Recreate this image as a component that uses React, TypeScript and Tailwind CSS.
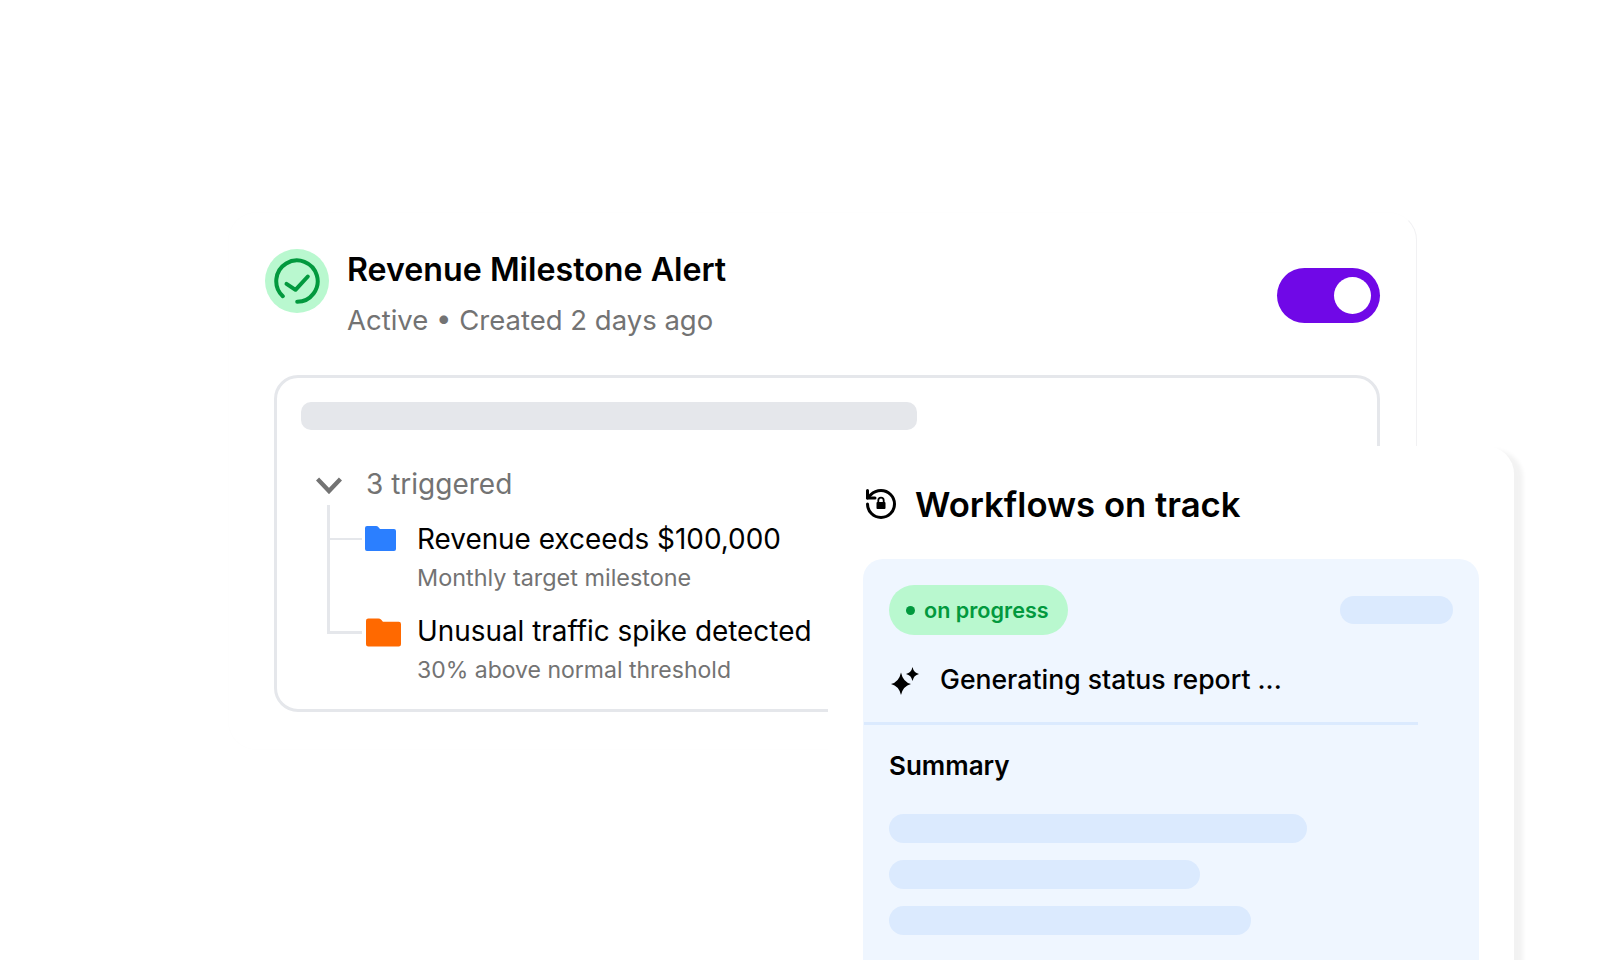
const font = { fontFamily: "Inter, 'Noto Sans', sans-serif" };

function CheckBadge() {
  return (
    <div className="ml-px flex h-16 w-16 shrink-0 items-center justify-center rounded-full bg-[#b9f8cf]">
      <svg width="46" height="46" viewBox="0 0 46 46" fill="none" stroke="#02993e" strokeWidth="4" strokeLinecap="round" strokeLinejoin="round">
        <path d="M8.8 38.2 A20.7 20.7 0 1 1 23.2 43.8" />
        <path d="M12.5 25.8 L21.5 31.8 L33.8 18.5" />
      </svg>
    </div>
  );
}

function Folder({ color, className }: { color: string; className: string }) {
  return (
    <svg className={className} viewBox="0 0 31 25" fill={color}>
      <path d="M2 0 H11 Q12.5 0 13.5 1.2 L15 3 H29 Q31 3 31 5 V23 Q31 25 29 25 H2 Q0 25 0 23 V2 Q0 0 2 0 Z" />
    </svg>
  );
}

function HistoryLock() {
  return (
    <svg width="36" height="36" viewBox="0 0 24 24" fill="none" stroke="#000" strokeWidth="2" strokeLinecap="round" strokeLinejoin="round" className="shrink-0">
      <path d="M3 12a9 9 0 1 0 9-9 9.75 9.75 0 0 0-6.74 2.74L3 8" />
      <path d="M3 3v5h5" />
      <rect x="9" y="10.7" width="6" height="4.6" rx="0.6" fill="#000" stroke="none" />
      <path d="M10.2 10.7 V9.6 a1.8 1.8 0 0 1 3.6 0 V10.7" strokeWidth="1.2" />
    </svg>
  );
}

function Sparkles() {
  return (
    <svg width="28" height="28" viewBox="0 0 28 28" fill="#000" className="ml-[2px] mt-[2px] shrink-0">
      <path d="M10 5.5 Q12 15 20 17 Q12 19 10 28 Q8 19 0 17 Q8 15 10 5.5 Z" />
      <path d="M21.5 0 Q22.7 5.8 28 7 Q22.7 8.2 21.5 14 Q20.3 8.2 15 7 Q20.3 5.8 21.5 0 Z" />
    </svg>
  );
}

function TriggerRow({ title, sub, subSize, folder, top }: { title: string; sub: string; subSize: string; folder: React.ReactNode; top: string }) {
  return (
    <div className={`flex ${top}`}>
      <div className="w-[52px] shrink-0 pt-[4px]">{folder}</div>
      <div>
        <div className="whitespace-nowrap text-[27.9px] leading-[34px] text-black">{title}</div>
        <div className={`mt-[7px] whitespace-nowrap leading-[30px] text-[#737373] ${subSize}`}>{sub}</div>
      </div>
    </div>
  );
}

export default function App() {
  return (
    <div className="relative h-[960px] w-[1600px] overflow-hidden bg-white" style={font}>
      <div className="pl-[228px] pt-[212px]">
        <div className="h-[538px] w-[1189px] rounded-[28px] border border-[#fefefe] border-r-[#f1f1f3] pl-[35px] pr-[36px] pt-[36px]">
          <div className="flex items-start">
            <CheckBadge />
            <div className="ml-[18px] flex-1 pt-[1px]">
              <div className="text-[32.2px] font-semibold leading-[40px] text-black">Revenue Milestone Alert</div>
              <div className="mt-[13px] text-[27.5px] leading-[34px] text-[#737373]">Active • Created 2 days ago</div>
            </div>
            <div className="mt-[19px] flex h-[55px] w-[103px] items-center justify-end rounded-full bg-[#7008e7] pr-[9px]">
              <div className="h-[37px] w-[37px] rounded-full bg-white" />
            </div>
          </div>
          <div className="ml-[10px] mt-[38px] h-[337px] rounded-[24px] border-[3px] border-[#e5e7eb] pl-[24px] pt-[24px]">
            <div className="h-[28px] w-[616px] rounded-[10px] bg-[#e5e7eb]" />
            <div className="relative mt-[34px]">
              <div className="flex h-[40px] items-center">
                <svg width="26" height="17" viewBox="0 0 26 17" fill="none" stroke="#737373" strokeWidth="4.4" strokeLinejoin="miter" className="ml-[15px] mt-[3px] shrink-0">
                  <path d="M1.5 2 L13 14 L24.5 2" />
                </svg>
                <span className="ml-[24px] text-[28px] text-[#737373]">3 triggered</span>
              </div>
              <div className="relative ml-[64px]">
                <div className="absolute -left-[38px] -top-[17px] h-[129px] w-[35px] border-b-[3px] border-l-[3px] border-[#e5e7eb]" />
                <div className="absolute -left-[35px] top-[16px] h-[2px] w-[32px] bg-[#e5e7eb]" />
                <TriggerRow
                  top="mt-[18px]"
                  title="Revenue exceeds $100,000"
                  sub="Monthly target milestone"
                  subSize="text-[23.4px]"
                  folder={<Folder color="#2b7fff" className="h-[25px] w-[31px]" />}
                />
                <TriggerRow
                  top="mt-[21px]"
                  title="Unusual traffic spike detected"
                  sub="30% above normal threshold"
                  subSize="text-[23px]"
                  folder={<Folder color="#ff6900" className="ml-[1px] h-[29px] w-[35px]" />}
                />
              </div>
            </div>
          </div>
        </div>
      </div>

      <div className="absolute left-[828px] top-[446px] h-[560px] w-[686px] rounded-[28px] bg-white pl-[35px] pt-[42px] shadow-[9px_4px_4px_rgba(0,0,0,0.05)]">
        <div className="flex h-[32px] items-center">
          <HistoryLock />
          <span className="ml-[16px] text-[34.7px] font-semibold text-black">Workflows on track</span>
        </div>
        <div className="mt-[39px] h-[500px] w-[616px] rounded-[20px] bg-[#eff6ff] pl-[26px] pt-[26px]">
          <div className="flex items-center justify-between pr-[26px]">
            <div className="flex h-[50px] w-[179px] items-center rounded-full bg-[#b9f8cf] pl-[17px]">
              <span className="h-[9px] w-[9px] rounded-full bg-[#02993e]" />
              <span className="ml-[9px] text-[21.6px] font-semibold text-[#02993e]">on progress</span>
            </div>
            <div className="h-[28px] w-[113px] rounded-full bg-[#dbeafe]" />
          </div>
          <div className="mt-[29px] flex h-[32px] items-center">
            <Sparkles />
            <span className="ml-[21px] text-[26.6px] font-medium text-black">Generating status report ...</span>
          </div>
          <div className="-ml-[25px] mt-[26px] h-[3px] w-[554px] bg-[#dbeafe]" />
          <div className="mt-[23px] text-[26px] font-semibold leading-[36px] text-black">Summary</div>
          <div className="mt-[30px] flex flex-col gap-[17px]">
            <div className="h-[29px] w-[418px] rounded-full bg-[#dbeafe]" />
            <div className="h-[29px] w-[311px] rounded-full bg-[#dbeafe]" />
            <div className="h-[29px] w-[362px] rounded-full bg-[#dbeafe]" />
          </div>
        </div>
      </div>
    </div>
  );
}
